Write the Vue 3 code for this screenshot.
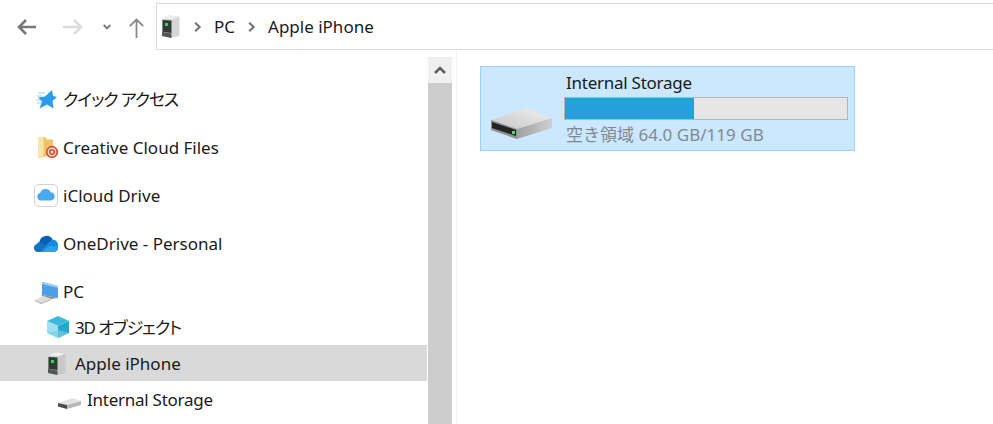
<template>
  <div class="window">
    <header class="toolbar">
      <div class="nav">
        <svg class="nav-back" width="19" height="16" viewBox="0 0 19 16"><path d="M19 8H2M9 1 2 8l7 7" fill="none" stroke="#777" stroke-width="2.600"/></svg>
        <svg class="nav-forward" width="20" height="16" viewBox="0 0 20 16"><path d="M0 8H18M11 1l7 7-7 7" fill="none" stroke="#dcdcdc" stroke-width="2.600"/></svg>
        <svg class="nav-down" width="8" height="6" viewBox="0 0 8 6"><path d="M.7 1 4 4.300 7.300 1" fill="none" stroke="#777" stroke-width="1.900"/></svg>
        <svg class="nav-up" width="15" height="20" viewBox="0 0 15 20"><path d="M7.500 20V1.500M.8 8.200 7.500 1.500l6.700 6.700" fill="none" stroke="#888" stroke-width="1.800"/></svg>
      </div>
      <div class="address">
        <svg class="addr-icon" width="18" height="23" viewBox="0 0 18 23">
          <path d="M0 4 7 0.500 17.500 1.500V21L8 23 0 21Z" fill="#d6d6d4"/>
          <path d="M0 3.500 7 .5 17.500 1.500 10 4.500Z" fill="#efefed"/>
          <path d="M.5 5 9.500 5.500V18L.5 17Z" fill="#2f3a33"/>
          <path d="M0 17 9.500 18.500V23L0 21Z" fill="#555553"/>
          <rect x="3" y="8" width="3" height="3" fill="#39d06a"/>
        </svg>
        <svg class="chev" width="8" height="10" viewBox="0 0 8 10"><path d="M1.200 .8 5.600 5 1.200 9.200" fill="none" stroke="#777" stroke-width="2.200"/></svg>
        <span class="crumb">PC</span>
        <svg class="chev chev-second" width="8" height="10" viewBox="0 0 8 10"><path d="M1.200 .8 5.600 5 1.200 9.200" fill="none" stroke="#777" stroke-width="2.200"/></svg>
        <span class="crumb">Apple iPhone</span>
      </div>
    </header>
    <div class="body">
      <aside class="sidebar">
        <nav class="tree">
          <div class="row root">
            <svg class="ico" width="30" height="36" viewBox="0 0 30 36">
              <path d="M19 9 20 15 24 16 19.500 20 20.500 27.500 14 23.500 6.500 27.500 9 20.500 5 16.500 12 15.500Z" fill="#2a9cec"/>
              <path d="M5 12h7M4 15h5M3 19h4M4 22h4" stroke="#9ed0f4" stroke-width="1"/>
            </svg>
            <span class="kana">クイック アクセス</span>
          </div>
          <div class="row root">
            <svg class="ico" width="30" height="36" viewBox="0 0 30 36">
              <path d="M5 8 12 8 14 10.500H20V26L5 29Z" fill="#efc468"/>
              <path d="M5 8H10.500V27L5 29Z" fill="#fbe5a8"/>
              <circle cx="19" cy="23" r="5.300" fill="#f6e2cc" stroke="#d84a2a" stroke-width="1.700"/>
              <circle cx="19" cy="23" r="2.300" fill="none" stroke="#d84a2a" stroke-width="1.500"/>
            </svg>
            <span>Creative Cloud Files</span>
          </div>
          <div class="row root">
            <svg class="ico" width="30" height="36" viewBox="0 0 30 36">
              <rect x="1.500" y="7.500" width="23" height="22" rx="4.500" fill="#fff" stroke="#cfd3d8"/>
              <path d="M8 23.500a3.800 3.800 0 0 1-.8-7.500 5.600 5.600 0 0 1 10.500-.8 4.200 4.200 0 0 1 .6 8.300Z" fill="#4aaaf0"/>
            </svg>
            <span>iCloud Drive</span>
          </div>
          <div class="row root">
            <svg class="ico" width="30" height="36" viewBox="0 0 30 36">
              <path d="M6.500 16.500A7 7 0 0 1 19.500 14.500L13 22H3Z" fill="#0a5fb0"/>
              <path d="M10 27H5A4 4 0 0 1 3 19.500L6 17 14 20.500Z" fill="#1273c8"/>
              <path d="M8 27 14 19 19.500 14.500A5.800 5.800 0 0 1 25 21.500 5 5 0 0 1 21 27Z" fill="#1a8ae0"/>
              <path d="M9 27 16 21 25 21.500A5 5 0 0 1 21 27Z" fill="#2aa2ea"/>
            </svg>
            <span>OneDrive - Personal</span>
          </div>
          <div class="row root">
            <svg class="ico" width="30" height="36" viewBox="0 0 30 36">
              <path d="M9 9 25 13V25L9 22Z" fill="#4a9fe8"/>
              <path d="M9 9 25 13V15L9 11Z" fill="#9ccdf2"/>
              <path d="M9 22 25 25 18 26 8 23Z" fill="#8c8c8c"/>
              <path d="M2 27 11 23 18 26 8 30Z" fill="#dcdcdc"/>
              <path d="M2 27V28L8 31 18 27V26L8 30Z" fill="#a5a5a5"/>
            </svg>
            <span>PC</span>
          </div>
          <div class="row child">
            <svg class="ico" width="30" height="36" viewBox="0 0 30 36">
              <path d="M13 7 24 12 13 17 2 12Z" fill="#3db9dc"/>
              <path d="M2 12 13 17V29L2 24Z" fill="#9fe0f0"/>
              <path d="M24 12 13 17V29L24 24Z" fill="#2aa6cc"/>
              <path d="M2 24 13 29 24 24 13 21Z" fill="#7dcde4" opacity=".7"/>
            </svg>
            <span class="kana">3D オブジェクト</span>
          </div>
          <div class="row child selected">
            <svg class="ico" width="30" height="36" viewBox="0 0 30 36">
              <path d="M3 11 10 7.500 20.500 8.500V28L11 30 3 28Z" fill="#c8c8c6"/>
              <path d="M3 10.500 10 7.500 20.500 8.500 13 11.500Z" fill="#efefed"/>
              <path d="M3.500 12 12.500 12.500V25L3.500 24Z" fill="#2f3a33"/>
              <path d="M3 24 12.500 25.500V30L3 28Z" fill="#555553"/>
              <rect x="6" y="15" width="3" height="3" fill="#39d06a"/>
            </svg>
            <span>Apple iPhone</span>
          </div>
          <div class="row leaf">
            <svg class="ico" width="30" height="36" viewBox="0 0 30 36">
              <path d="M1 22 16 17 24 20 10 24Z" fill="#e4e4e4"/>
              <path d="M1 22 10 24V28L1 25.500Z" fill="#4a4a4a"/>
              <path d="M10 24 24 20V24L10 28Z" fill="#b8b8b8"/>
            </svg>
            <span class="narrow">Internal Storage</span>
          </div>
        </nav>
        <div class="scrollbar">
          <div class="scroll-btn">
            <svg width="12" height="8" viewBox="0 0 12 8"><path d="M1 7 6 2l5 5" fill="none" stroke="#606060" stroke-width="2.600"/></svg>
          </div>
          <div class="scroll-thumb"></div>
        </div>
      </aside>
      <main class="content">
        <div class="tile">
          <svg class="tile-icon" width="64" height="33" viewBox="490 107 64 33">
            <defs>
              <linearGradient id="top" x1="0" y1="1" x2="1" y2="0"><stop offset="0" stop-color="#c6c6c6"/><stop offset="1" stop-color="#f0f0f0"/></linearGradient>
              <linearGradient id="side" x1="0" y1="0" x2="1" y2="0"><stop offset="0" stop-color="#a0a0a0"/><stop offset="1" stop-color="#cfcfcf"/></linearGradient>
            </defs>
            <path d="M491 120 526 108 552 118 517 129Z" fill="url(#top)"/>
            <path d="M517 129 552 118V128L517 139Z" fill="url(#side)"/>
            <path d="M491 120 517 129V139L491 130Z" fill="#8e8e8e"/>
            <path d="M492 122 516 130V136L492 128Z" fill="#242422"/>
            <rect x="512" y="131" width="3" height="3" fill="#3fe07a"/>
          </svg>
          <div class="tile-info">
            <div class="tile-name">Internal Storage</div>
            <div class="meter"><div class="meter-fill" :style="{ width: used + '%' }"></div></div>
            <div class="tile-free">空き領域 64.0 GB/119 GB</div>
          </div>
        </div>
      </main>
    </div>
  </div>
</template>

<script setup>
const used = 45.7
</script>

<style>
html, body { margin: 0; background: #fff; overflow: hidden; }
</style>

<style scoped>
.window {
  width: 993px;
  height: 424px;
  overflow: hidden;
  background: #fff;
  font-family: "Noto Sans", "Noto Sans CJK JP", sans-serif;
  font-size: 17px;
  color: #1a1a1a;
  display: flex;
  flex-direction: column;
}
.toolbar { height: 50px; display: flex; flex: none; }
.nav { width: 156px; flex: none; display: flex; align-items: center; padding: 4px 0 0 17px; box-sizing: border-box; }
.nav-forward { margin-left: 27px; }
.nav-down { margin-left: 20px; }
.nav-up { margin-left: 18px; margin-top: 2px; }
.address {
  flex: 1;
  border: 1px solid #d9d9d9;
  border-right: none;
  margin-top: 3px;
  display: flex;
  align-items: center;
  padding-left: 5px;
  box-sizing: border-box;
}
.chev { margin: 0 12px 0 14px; }
.chev-second { margin-left: 13px; }
.crumb { line-height: 24px; }
.body { flex: 1; display: flex; min-height: 0; }
.sidebar { width: 456px; flex: none; display: flex; border-right: 1px solid #f2f2f2; }
.tree { width: 428px; flex: none; padding-top: 31px; box-sizing: border-box; }
.row { height: 36px; display: flex; align-items: center; }
.root { padding-left: 33px; margin-bottom: 12px; }
.root:nth-child(5) { margin-bottom: 0; }
.child { padding-left: 45px; }
.leaf { padding-left: 57px; }
.selected { background: #d9d9d9; margin-right: 1px; }
.ico { flex: none; }
.row span { white-space: nowrap; }
.kana { font-feature-settings: "palt"; margin-top: -2px; letter-spacing: -1.100px; }
.narrow { letter-spacing: -0.25px; }
.scrollbar { width: 24px; flex: none; margin-top: 7px; display: flex; flex-direction: column; }
.scroll-btn { height: 26px; background: #f0f0f0; display: flex; align-items: center; justify-content: center; flex: none; }
.scroll-thumb { flex: 1; background: #cdcdcd; }
.content { flex: 1; padding: 16px 0 0 23px; }
.tile {
  width: 375px;
  height: 85px;
  box-sizing: border-box;
  background: #cce8ff;
  border: 1px solid #99d1ff;
  display: flex;
  padding: 0 6px 0 9px;
}
.tile-icon { flex: none; margin-top: 40px; margin-right: 10px; }
.tile-info { flex: 1; min-width: 0; }
.tile-name { line-height: 24px; margin: 4px 0 0 2px; letter-spacing: -0.25px; }
.meter { height: 23px; margin-top: 2px; background: #e6e6e6; border: 1px solid #b5b5b5; box-sizing: border-box; }
.meter-fill { height: 100%; background: #26a0da; }
.tile-free { color: #7f8a92; line-height: 24px; margin: 3px 0 0 2px; letter-spacing: 0.02px; }
</style>
